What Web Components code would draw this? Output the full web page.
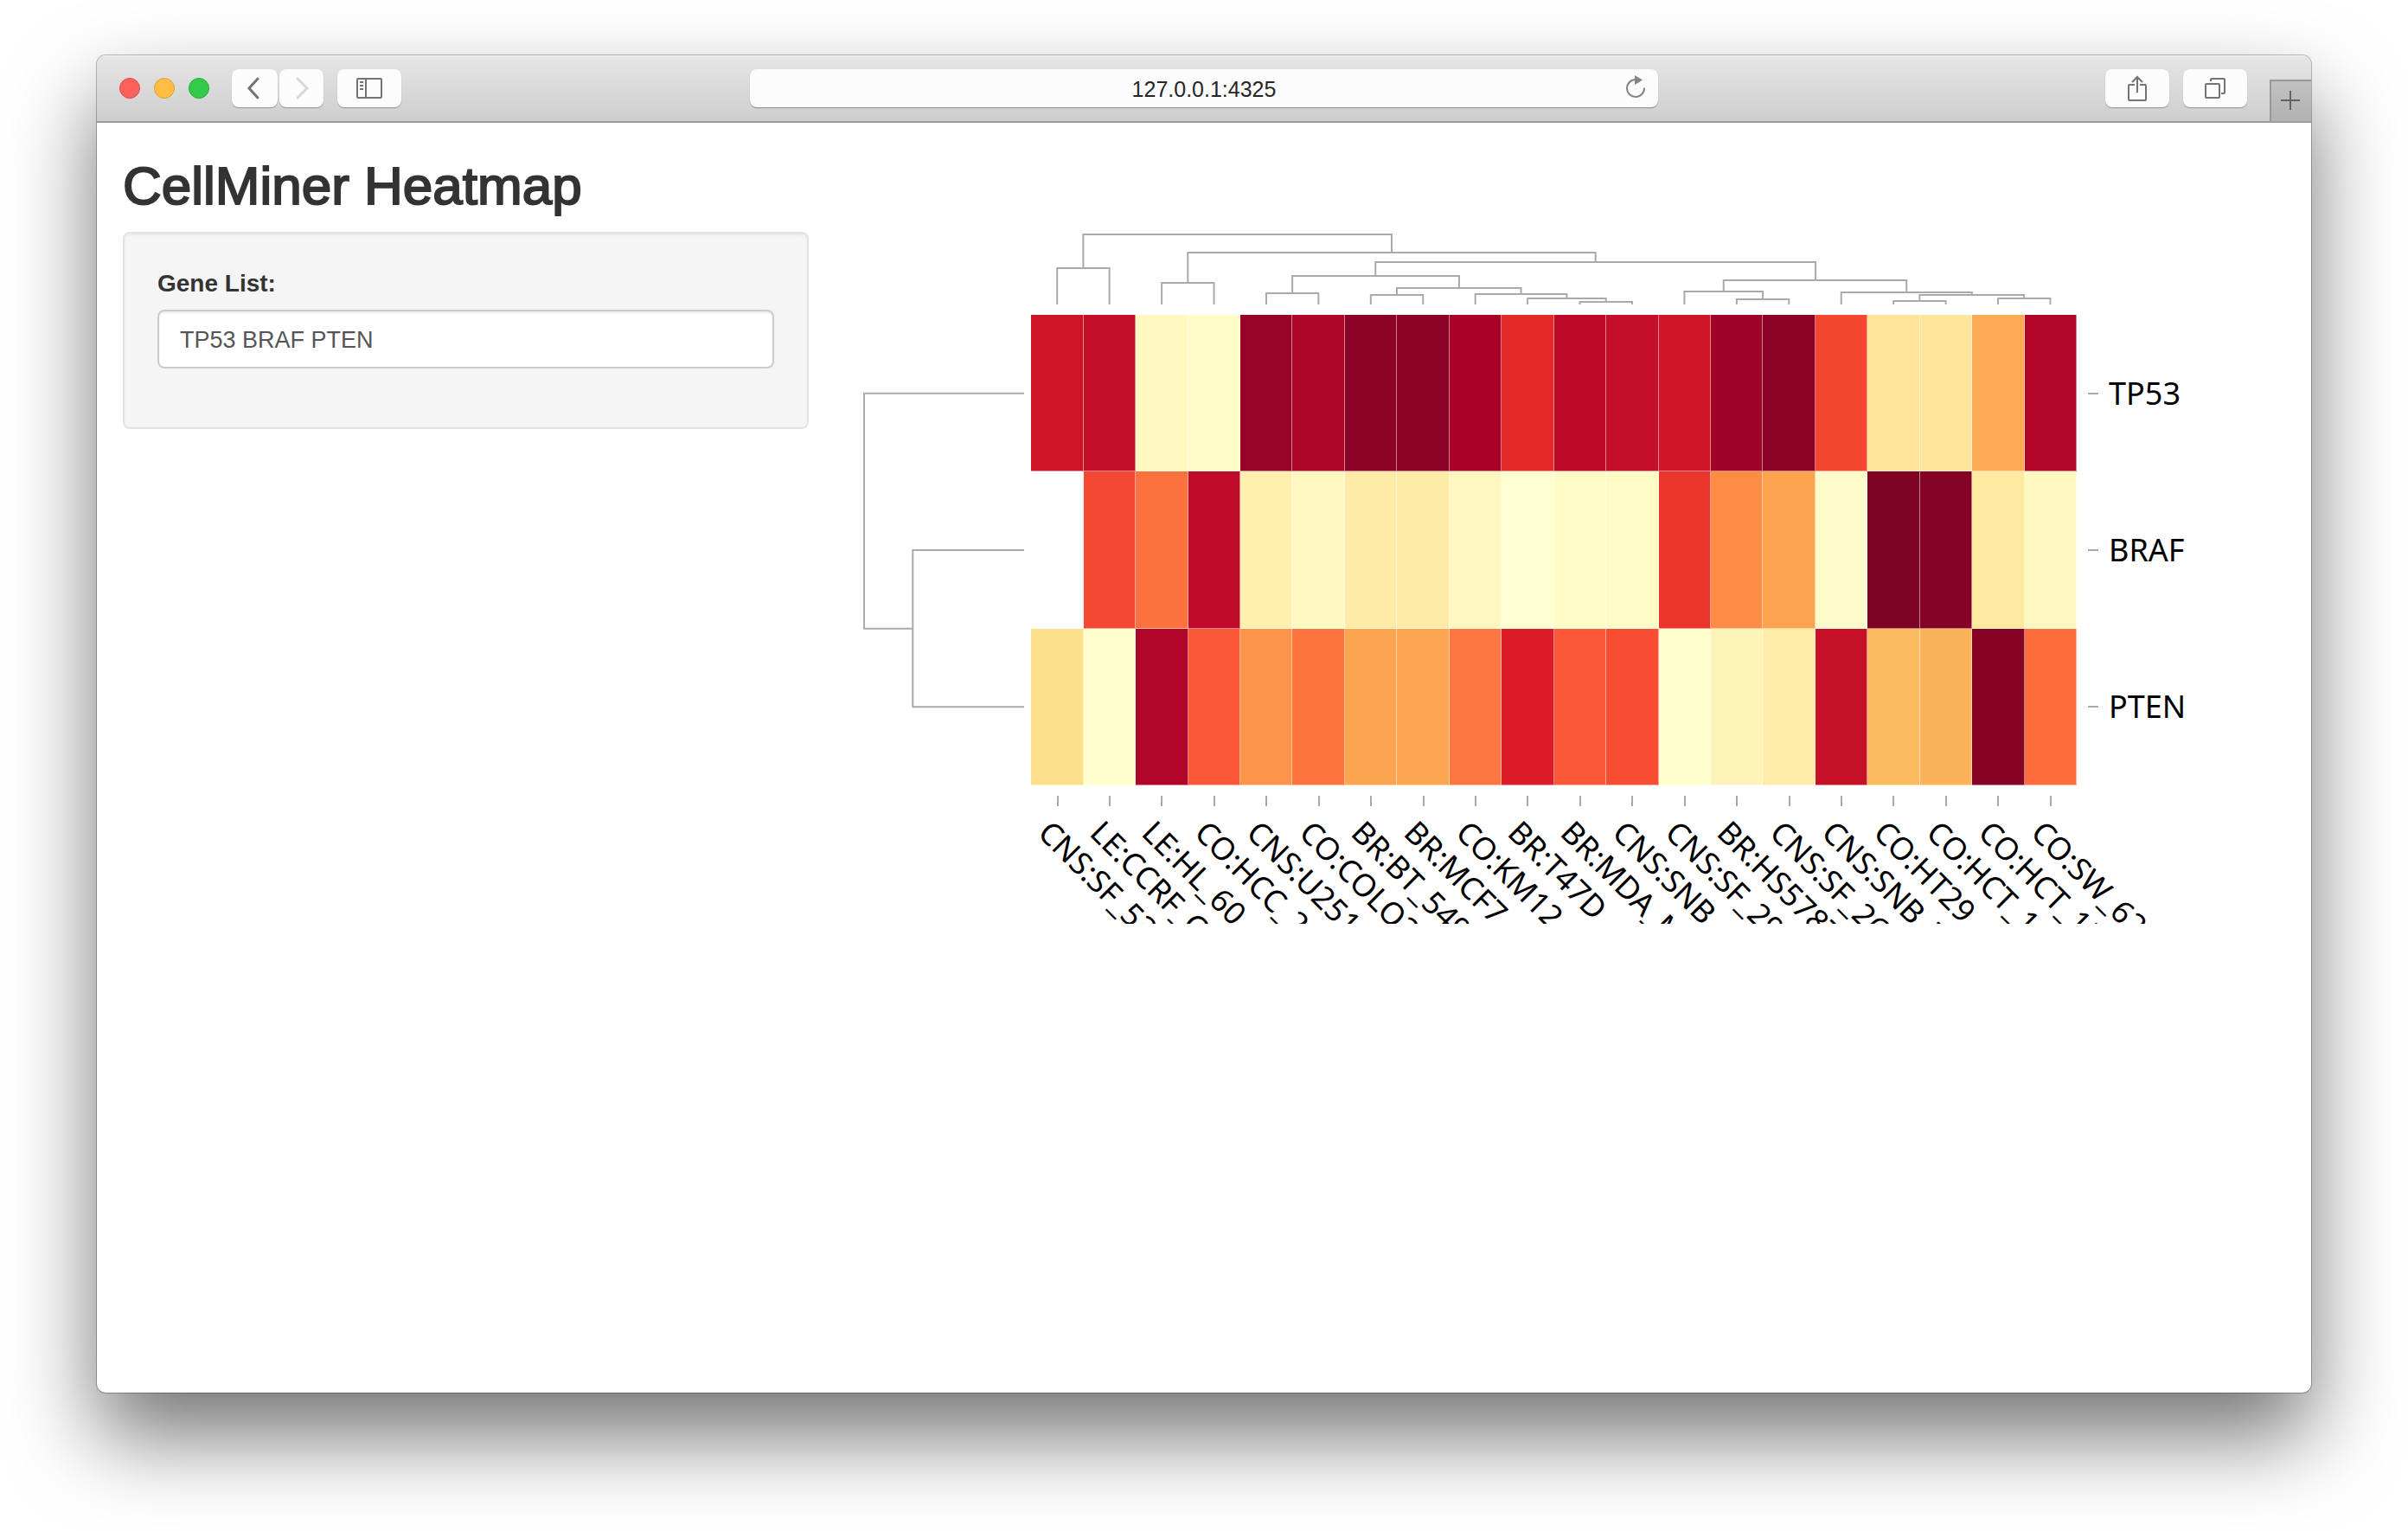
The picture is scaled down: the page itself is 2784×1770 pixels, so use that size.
<!DOCTYPE html>
<html lang="en">
<head>
<meta charset="utf-8">
<title>CellMiner Heatmap</title>
<style>
  html, body { margin: 0; background: #fff; }
  body { font-family: "Liberation Sans", Arial, sans-serif; color: #333; overflow: hidden; }
</style>
</head>
<body>
<browser-window address="127.0.0.1:4325">
  <miner-page heading="CellMiner Heatmap">
    <gene-form slot="sidebar" value="TP53 BRAF PTEN"></gene-form>
    <cluster-heatmap slot="main"></cluster-heatmap>
  </miner-page>
</browser-window>

<script>
function attach(el, html) {
  el.attachShadow({ mode: 'open' }).innerHTML = html;
}

class ToolButton extends HTMLElement {
  constructor() {
    super();
    attach(this, `
      <style>
        :host { display: block; }
        button { display: flex; align-items: center; justify-content: center; width: 100%; height: 44px; padding: 0; border: 0; border-radius: 8px;
          background: #fcfcfc; box-shadow: 0 1px 1px rgba(0,0,0,.3); color: #737373; }
      </style>
      <button type="button"><slot></slot></button>`);
    this.shadowRoot.querySelector('button').setAttribute('aria-label', this.getAttribute('name') || '');
  }
}
customElements.define('tool-button', ToolButton);

class BrowserToolbar extends HTMLElement {
  constructor() {
    super();
    attach(this, `
      <style>
        :host { display: flex; align-items: center; height: 76px; border-bottom: 2px solid #9b9b9b;
          background: linear-gradient(#f4f4f4, #e5e5e5 2px, #cecece); }
        .side { flex: 1; display: flex; align-items: center; min-width: 0; height: 100%; }
        .lights { display: flex; gap: 16px; margin: 0 26px; }
        .lights button { box-sizing: border-box; width: 24px; height: 24px; padding: 0; border: 1px solid; border-radius: 50%; }
        .red { background: #fd615c; border-color: #df4744 !important; }
        .amber { background: #fdbe41; border-color: #de9f34 !important; }
        .green { background: #34cb4a; border-color: #27a832 !important; }
        .nav { display: flex; gap: 2px; margin-right: 16px; }
        .back { width: 53px; } .next { width: 51px; }
        .wide { width: 74px; }
        .address { position: relative; box-sizing: border-box; width: 41%; height: 44px; border-radius: 8px; background: #fcfcfc;
          box-shadow: 0 1px 1px rgba(0,0,0,.35); }
        input { box-sizing: border-box; width: 100%; height: 44px; border: 0; padding: 3px 0 0; outline: 0; background: none;
          text-align: center; font: 25px/40px "Liberation Sans", Arial, sans-serif; color: #262626; }
        .reload { position: absolute; right: 12px; top: 4px; width: 28px; height: 36px; border: 0; padding: 0; background: none; }
        .right { justify-content: flex-end; gap: 16px; }
        .tab { align-self: flex-end; box-sizing: border-box; width: 48px; height: 48px; margin-left: 10px; padding: 0;
          border: solid #999; border-width: 2px 0 0 2px; background: linear-gradient(#c1c1c1, #b2b2b2); color: #626262; }
        svg { display: block; fill: none; stroke: #737373; stroke-width: 2; }
        .tab svg { stroke: #626262; }
        .next svg { stroke: #d8d8d8; }
      </style>
      <div class="side">
        <div class="lights">
          <button class="red" aria-label="Close"></button>
          <button class="amber" aria-label="Minimise"></button>
          <button class="green" aria-label="Zoom"></button>
        </div>
        <div class="nav">
          <tool-button class="back" name="Back"><svg width="20" height="28" viewBox="0 0 20 28" style="stroke-width:3"><path d="M13 3 3 14 13 25" stroke-linecap="round"/></svg></tool-button>
          <tool-button class="next" name="Forward"><svg width="20" height="28" viewBox="0 0 20 28" style="stroke-width:3"><path d="M5 3 16 14 5 25" stroke-linecap="round"/></svg></tool-button>
        </div>
        <tool-button class="wide" name="Sidebar"><svg width="30" height="24" viewBox="0 0 30 24"><rect x="1" y="1" width="28" height="22" rx="1"/><path d="M11 1v22M4 5h4M4 9h4M4 13h4"/></svg></tool-button>
      </div>
      <div class="address">
        <input type="text" aria-label="Address">
        <button class="reload" aria-label="Reload"><svg width="28" height="36" viewBox="0 0 28 36"><path d="M14 8a10 10 0 1 0 10 9.500" style="stroke:#858585"/><path d="M13 3v11l9-5.500z" style="fill:#858585;stroke:none"/></svg></button>
      </div>
      <div class="side right">
        <tool-button class="wide" name="Share"><svg width="24" height="32" viewBox="0 0 24 32"><path d="M9 12H3a1 1 0 0 0-1 1v16a1 1 0 0 0 1 1h18a1 1 0 0 0 1-1V13a1 1 0 0 0-1-1h-6M12 21V3M6 9l6-6 6 6"/></svg></tool-button>
        <tool-button class="wide" name="Tabs"><svg width="24" height="26" viewBox="0 0 24 26"><rect x="1" y="8" width="16" height="16" rx="1"/><path d="M7 5V3a1 1 0 0 1 1-1h14a1 1 0 0 1 1 1v15a1 1 0 0 1-1 1h-3"/></svg></tool-button>
        <button class="tab" aria-label="New tab"><svg width="46" height="46" viewBox="0 0 46 46"><path d="M11 22h22M22 11v22"/></svg></button>
      </div>`);
    this.shadowRoot.querySelector('input').value = this.getAttribute('address');
  }
}

class BrowserWindow extends HTMLElement {
  constructor() {
    super();
    attach(this, `
      <style>
        :host { display: flex; flex-direction: column; margin: 64px 112px 160px; min-height: calc(100vh - 224px); border-radius: 10px; background: #fff;
          box-shadow: 0 0 0 1px rgba(0,0,0,.26), 0 50px 100px rgba(0,0,0,.55); }
        .clip { flex: 1; border-radius: 10px; overflow: hidden; }
      </style>
      <div class="clip"><browser-toolbar address="${this.getAttribute('address')}"></browser-toolbar><slot></slot></div>`);
  }
}

class MinerPage extends HTMLElement {
  constructor() {
    super();
    attach(this, `
      <style>
        :host { display: block; padding: 40px 30px 0; }
        h2 { margin: 0 0 20px; font-size: 62px; line-height: 66px; font-weight: 400; color: #333; -webkit-text-stroke: 2px #333; }
        .row { display: grid; grid-template-columns: 1fr 2fr; margin: 0 -30px; }
        .row > div { padding: 0 30px; min-width: 0; }
      </style>
      <h2>${this.getAttribute('heading')}</h2>
      <div class="row"><div><slot name="sidebar"></slot></div><div><slot name="main"></slot></div></div>`);
  }
}

class GeneForm extends HTMLElement {
  constructor() {
    super();
    attach(this, `
      <style>
        :host { display: block; }
        form { padding: 38px 38px 68px; border: 2px solid #e3e3e3; border-radius: 8px; background: #f5f5f5; box-shadow: inset 0 2px 2px rgba(0,0,0,.05); }
        label { display: block; margin-bottom: 10px; font-size: 28px; line-height: 40px; font-weight: 700; }
        input { display: block; box-sizing: border-box; width: 100%; height: 68px; padding: 2px 24px 0; border: 2px solid #ccc; border-radius: 8px;
          background: #fff; box-shadow: inset 0 2px 2px rgba(0,0,0,.075); font: 27px/40px "Liberation Sans", Arial, sans-serif; color: #555; }
      </style>
      <form><label for="genes">Gene List:</label><input id="genes" type="text"></form>`);
    this.shadowRoot.querySelector('input').value = this.getAttribute('value');
  }
}

/* Draws bracket-shaped tree links; each link is [start, end, height, startDepth, endDepth]. */
class DendroTree extends HTMLElement {
  draw(links, width, height, sideways) {
    const d = links.map(([a, b, h, ha, hb]) => sideways
      ? `M${ha} ${a}H${h}V${b}H${hb}` : `M${a} ${ha}V${h}H${b}V${hb}`).join('');
    attach(this, `
      <style>
        :host { display: block; min-width: 0; }
        svg { display: block; width: 100%; height: 100%; overflow: visible; fill: none; stroke: #aaa; stroke-width: 2; }
        path { vector-effect: non-scaling-stroke; }
      </style>
      <svg viewBox="0 0 ${width} ${height}" preserveAspectRatio="none" aria-hidden="true"><path d="${d}"/></svg>`);
  }
}

const GENES = ['TP53', 'BRAF', 'PTEN'];
const LINES = ['CNS:SF_539', 'LE:CCRF_CEM', 'LE:HL_60', 'CO:HCC_2998', 'CNS:U251', 'CO:COLO205', 'BR:BT_549', 'BR:MCF7', 'CO:KM12', 'BR:T47D',
  'BR:MDA_MB_231', 'CNS:SNB_19', 'CNS:SF_295', 'BR:HS578T', 'CNS:SF_268', 'CNS:SNB_75', 'CO:HT29', 'CO:HCT_116', 'CO:HCT_15', 'CO:SW_620'];
const COLORS = [
  'ce1527 c50f28 fff9c1 fffbc7 980328 ad0528 8a0327 8a0327 a90428 e32a27 be0a29 c50f28 ce1626 9f0228 8a0327 f54730 fde498 fde69b fcab53 b10528',
  'ffffff f44833 fd713e bf0a29 fff0b0 fff8c1 feeba5 feeca6 fff7bf fffed0 fffcc8 fffcc6 eb372b fd8d45 fca34f fffccb 7f0325 830326 fde99f fff8c1',
  'fde08c fffecc ae0529 fb5837 fc954a fc743e fca550 fca651 fc7741 db1b26 fb5837 f64d33 fffecc fff3b7 ffeca7 c61028 fcba60 fcb258 860326 fd6c3b'
].map(r => r.split(' '));
const COLUMN_LINKS = [
  [1, 6.900, 3, 42, 24], [.5, 1.500, 42, 84, 84], [3, 10.800, 24, 59, 35], [2.500, 3.500, 59, 84, 84],
  [6.590, 15.010, 35, 51, 56], [5, 8.190, 51, 71, 65], [4.500, 5.500, 71, 84, 84], [7, 9.375, 65, 73, 72],
  [6.500, 7.500, 73, 84, 84], [8.500, 10.250, 72, 84, 77], [9.500, 11, 77, 84, 81], [10.500, 11.500, 81, 84, 84],
  [13.250, 16.750, 56, 69, 70], [12.500, 14, 69, 84, 78], [13.500, 14.500, 78, 84, 84],
  [15.500, 18, 70, 84, 73], [17, 19, 73, 80, 77], [16.500, 17.500, 80, 84, 84], [18.500, 19.500, 77, 84, 84]];
const ROW_LINKS = [[.5, 2, 4, 188, 60], [1.500, 2.500, 60, 188, 188]];

class ClusterHeatmap extends HTMLElement {
  constructor() {
    super();
    attach(this, `
      <style>
        :host { display: grid; grid-template-columns: 189px 1fr 241px; grid-template-rows: 84px 544px 148px; row-gap: 12px;
          font-family: "Noto Sans", "Open Sans", sans-serif; font-size: 36px; color: #000; }
        .tree-top { grid-area: 1 / 2; margin-left: 8px; }
        .tree-left { grid-area: 2 / 1; }
        .cells { grid-area: 2 / 2; margin-left: 8px; display: grid; grid-template-columns: repeat(20, 1fr); grid-template-rows: repeat(3, 1fr); }
        .cells i { box-shadow: inset -1px -1px rgba(255,255,255,.5); }
        .rows { grid-area: 2 / 3; display: grid; grid-template-rows: repeat(3, 1fr); align-items: center; }
        .rows div { display: flex; align-items: center; gap: 12px; padding-left: 13px; line-height: 44px; }
        .rows div::before { content: ""; width: 12px; height: 2px; background: #aaa; }
        .cols { grid-area: 3 / 2; margin-left: 8px; display: grid; grid-template-columns: repeat(20, 1fr); overflow-x: visible; overflow-y: clip; }
        .cols div { display: flex; flex-direction: column; align-items: center; gap: 8px; min-width: 0; }
        .cols div::before { content: ""; width: 2px; height: 12px; background: #aaa; }
        .cols span { width: 0; line-height: 44px; white-space: nowrap; transform: rotate(45deg); transform-origin: 0 0; }
      </style>
      <dendro-tree class="tree-top"></dendro-tree>
      <dendro-tree class="tree-left"></dendro-tree>
      <div class="cells">${COLORS.map(r => r.map(c => `<i style="background:#${c}"></i>`).join('')).join('')}</div>
      <div class="rows">${GENES.map(g => `<div><span>${g}</span></div>`).join('')}</div>
      <div class="cols">${LINES.map(l => `<div><span>${l}</span></div>`).join('')}</div>`);
    this.shadowRoot.querySelector('.tree-top').draw(COLUMN_LINKS, 20, 84, false);
    this.shadowRoot.querySelector('.tree-left').draw(ROW_LINKS, 188, 3, true);
  }
}

customElements.define('browser-toolbar', BrowserToolbar);
customElements.define('dendro-tree', DendroTree);
customElements.define('gene-form', GeneForm);
customElements.define('cluster-heatmap', ClusterHeatmap);
customElements.define('miner-page', MinerPage);
customElements.define('browser-window', BrowserWindow);
</script>
</body>
</html>
